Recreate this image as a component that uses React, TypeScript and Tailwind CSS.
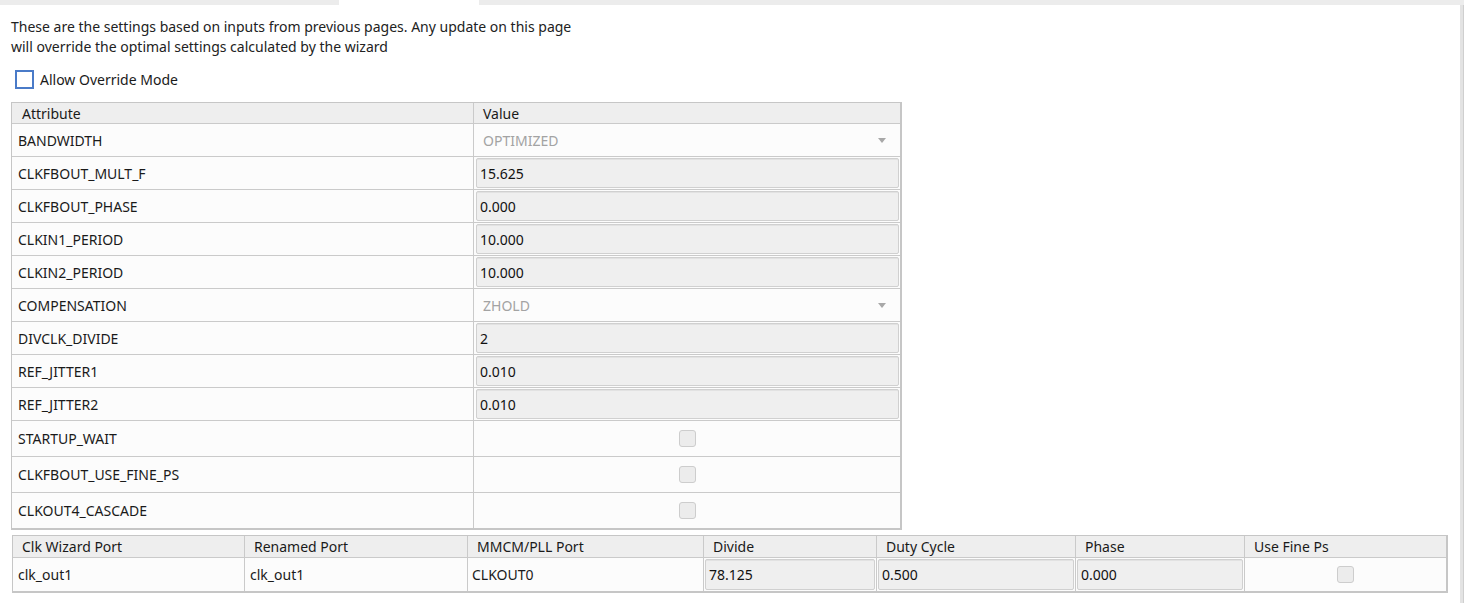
import React from "react";

const font = { fontFamily: '"Noto Sans", "Open Sans", sans-serif' };

type Row =
  | { name: string; kind: "select"; value: string }
  | { name: string; kind: "text"; value: string }
  | { name: string; kind: "check" };

const rows: Row[] = [
  { name: "BANDWIDTH", kind: "select", value: "OPTIMIZED" },
  { name: "CLKFBOUT_MULT_F", kind: "text", value: "15.625" },
  { name: "CLKFBOUT_PHASE", kind: "text", value: "0.000" },
  { name: "CLKIN1_PERIOD", kind: "text", value: "10.000" },
  { name: "CLKIN2_PERIOD", kind: "text", value: "10.000" },
  { name: "COMPENSATION", kind: "select", value: "ZHOLD" },
  { name: "DIVCLK_DIVIDE", kind: "text", value: "2" },
  { name: "REF_JITTER1", kind: "text", value: "0.010" },
  { name: "REF_JITTER2", kind: "text", value: "0.010" },
  { name: "STARTUP_WAIT", kind: "check" },
  { name: "CLKFBOUT_USE_FINE_PS", kind: "check" },
  { name: "CLKOUT4_CASCADE", kind: "check" },
];

function FakeCheck() {
  return <div className="w-[17px] h-[17px] rounded-[3px] border border-[#cdcdcd] bg-[#ececec]" />;
}

function Field({ value }: { value: string }) {
  return (
    <div className="h-full flex items-center px-[3px] bg-[#efefef] border border-[#d0d0d0] rounded-[2px] shadow-[inset_0_1px_0_#e2e2e2] text-[#111]">
      {value}
    </div>
  );
}

export default function App() {
  return (
    <div className="w-[1464px] h-[603px] bg-white flex flex-col text-[14px] text-[#1a1a1a] overflow-hidden" style={font}>
      {/* tab strip */}
      <div className="h-[5px] flex shrink-0">
        <div className="w-[339px] bg-[#ececec]" />
        <div className="w-[140px] bg-white" />
        <div className="flex-1 bg-[#ececec]" />
      </div>

      <div className="flex-1 flex">
        <div className="flex-1 flex flex-col pl-[11px]">
          <div className="mt-[12px] leading-[20px] text-[14px] text-[#222]">
            <div>These are the settings based on inputs from previous pages. Any update on this page</div>
            <div>will override the optimal settings calculated by the wizard</div>
          </div>

          <div className="mt-[13px] flex items-center gap-[6px] h-[19px] pl-[4px]">
            <div className="w-[19px] h-[19px] border-2 border-[#4a7bc8] bg-white" />
            <span className="text-[14px]">Allow Override Mode</span>
          </div>

          {/* attribute table */}
          <div className="mt-[13px] w-[891px] border-l border-t border-r-2 border-b-2 border-[#c6c6c6] bg-[#fcfcfc]">
            <div className="grid grid-cols-[462px_1fr] h-[21px] bg-[#eeeeee] border-b border-[#cacaca]">
              <div className="pl-[10px] flex items-center border-r border-[#cacaca]">Attribute</div>
              <div className="pl-[9px] flex items-center">Value</div>
            </div>
            {rows.map((r, i) => (
              <div
                key={r.name}
                className={`grid grid-cols-[462px_1fr] ${r.kind === "check" ? (i === rows.length - 1 ? "h-[35px]" : "h-[36px]") : "h-[33px]"} ${i < rows.length - 1 ? "border-b border-[#cacaca]" : ""}`}
              >
                <div className="pl-[6px] flex items-center border-r border-[#cacaca]">{r.name}</div>
                {r.kind === "select" && (
                  <div className="flex items-center justify-between pl-[9px] pr-[14px] text-[#a3a3a3]">
                    <span>{r.value}</span>
                    <svg width="8" height="5" viewBox="0 0 8 5">
                      <path d="M0 0H8L4 5Z" fill="#a8a8a8" />
                    </svg>
                  </div>
                )}
                {r.kind === "text" && (
                  <div className="p-[1px] pl-[2px]">
                    <Field value={r.value} />
                  </div>
                )}
                {r.kind === "check" && (
                  <div className="flex items-center justify-center">
                    <FakeCheck />
                  </div>
                )}
              </div>
            ))}
          </div>

          {/* output port table */}
          <div className="mt-[5px] ml-[1px] w-[1436px] border-l border-t border-r-2 border-b-2 border-[#c6c6c6] bg-[#fcfcfc]">
            <div className="grid grid-cols-[232px_223px_236px_173px_199px_169px_1fr] h-[22px] bg-[#eeeeee] border-b border-[#cacaca]">
              {["Clk Wizard Port", "Renamed Port", "MMCM/PLL Port", "Divide", "Duty Cycle", "Phase", "Use Fine Ps"].map((h, i) => (
                <div key={h} className={`pl-[9px] flex items-center ${i < 6 ? "border-r border-[#cacaca]" : ""}`}>
                  {h}
                </div>
              ))}
            </div>
            <div className="grid grid-cols-[232px_223px_236px_173px_199px_169px_1fr] h-[33px]">
              <div className="pl-[5px] flex items-center border-r border-[#cacaca]">clk_out1</div>
              <div className="pl-[5px] flex items-center border-r border-[#cacaca]">clk_out1</div>
              <div className="pl-[4px] flex items-center border-r border-[#cacaca]">CLKOUT0</div>
              {["78.125", "0.500", "0.000"].map((v) => (
                <div key={v} className="p-[1px] border-r border-[#cacaca]">
                  <Field value={v} />
                </div>
              ))}
              <div className="flex items-center justify-center">
                <FakeCheck />
              </div>
            </div>
          </div>
        </div>

        {/* scrollbar edge */}
        <div className="w-[4px] bg-[#e3e3e3] border-r border-[#cfcfcf]" />
      </div>
    </div>
  );
}
